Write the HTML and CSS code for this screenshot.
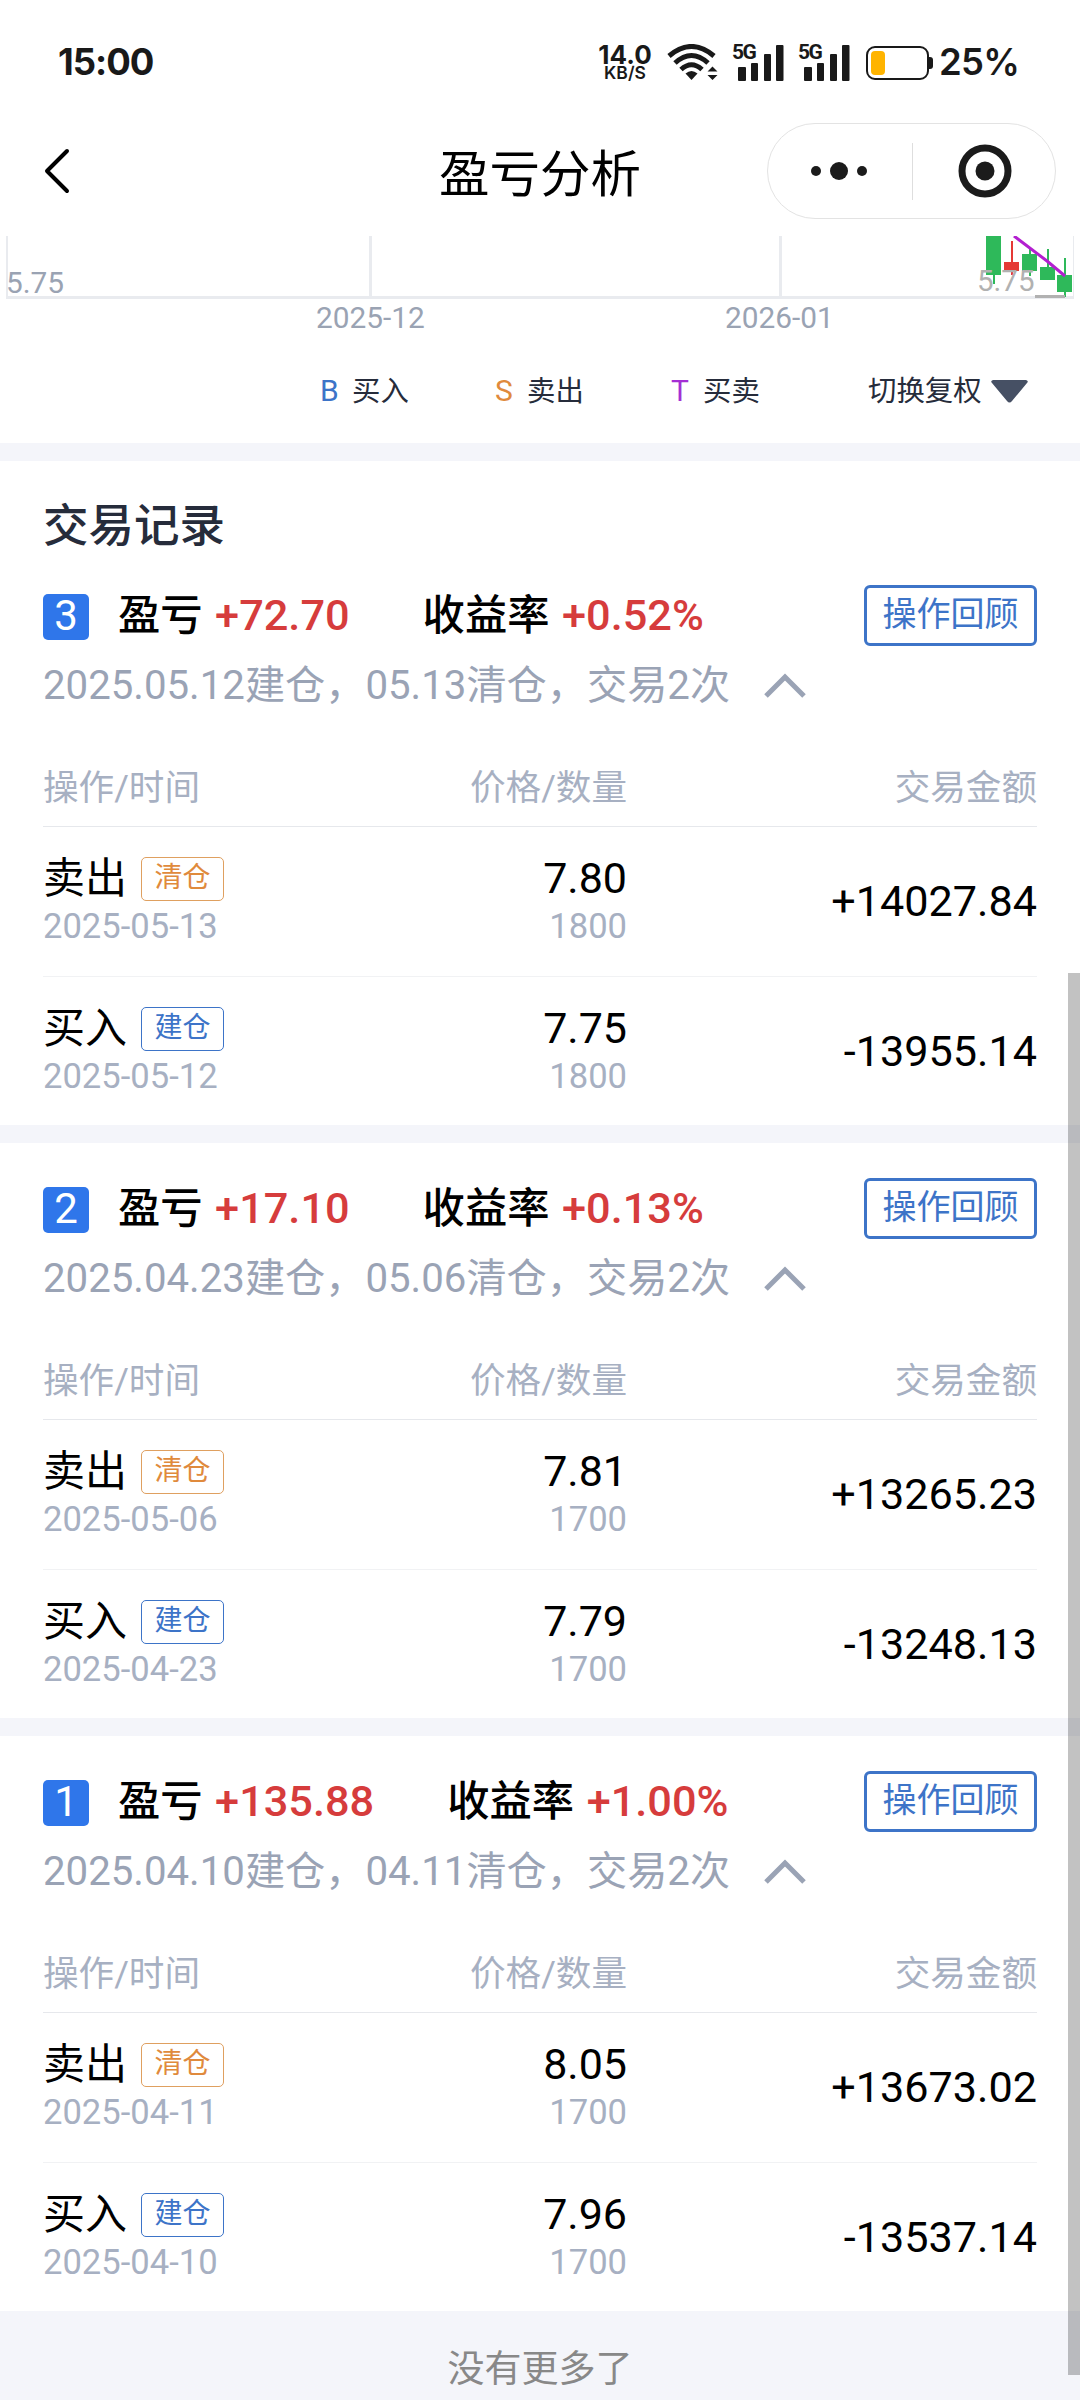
FILE: index.html
```html
<!DOCTYPE html>
<html lang="zh-CN">
<head>
<meta charset="utf-8">
<title>盈亏分析</title>
<link rel="stylesheet" href="styles.css">
</head>
<body>
<div class="screen">
  <header class="status">
    <span class="time">15:00</span>
    <div class="rate"><b>14.0</b><i>KB/S</i></div>
    <svg class="wifi" width="51" height="37" viewBox="0 0 51 37" fill="none" stroke="#191919" stroke-width="5">
      <path d="M2 12Q24.500-7 47 12M8 19Q24.500 4 41 19M14 25.500Q24.500 16 35 25.500"/>
      <path d="M18.500 29.500Q24.500 24.500 30.500 29.500L24.500 36Z" fill="#191919" stroke="none"/>
      <path d="M40.500 27.500L45.500 22.500L50.500 27.500ZM40.500 31L45.500 36L50.500 31Z" fill="#191919" stroke="none"/>
    </svg>
    <div class="signal"><span>5G</span><svg width="51" height="37" viewBox="0 0 51 37" fill="#191919"><rect x="5" y="23" width="8" height="14" rx="1"/><rect x="18" y="19" width="7" height="18" rx="1"/><rect x="31" y="10" width="7" height="27" rx="1"/><rect x="43" y="1" width="7.500" height="36" rx="1"/></svg></div>
    <div class="signal"><span>5G</span><svg width="51" height="37" viewBox="0 0 51 37" fill="#191919"><rect x="5" y="23" width="8" height="14" rx="1"/><rect x="18" y="19" width="7" height="18" rx="1"/><rect x="31" y="10" width="7" height="27" rx="1"/><rect x="43" y="1" width="7.500" height="36" rx="1"/></svg></div>
    <svg class="battery" width="67" height="34" viewBox="0 0 67 34"><rect x="1" y="1" width="61" height="32" rx="8" fill="none" stroke="#191919" stroke-width="2"/><path d="M63 11h1q3 0 3 3v6q0 3-3 3h-1z" fill="#191919"/><rect x="5" y="5" width="14" height="24" rx="4" fill="#ffb400"/></svg>
    <span class="percent">25%</span>
  </header>

  <nav class="nav">
    <svg class="back" width="26" height="48" viewBox="0 0 26 48" fill="none" stroke="#000" stroke-width="4" stroke-linecap="round" stroke-linejoin="round"><path d="M23 4L3 24L23 44"/></svg>
    <h1>盈亏分析</h1>
    <div class="capsule">
      <svg width="56" height="18" viewBox="0 0 56 18" fill="#1b1b1b"><circle cx="5" cy="9" r="5"/><circle cx="28" cy="9" r="9"/><circle cx="51" cy="9" r="5"/></svg>
      <span class="rule"></span>
      <svg width="54" height="54" viewBox="0 0 54 54"><circle cx="27" cy="27" r="23" fill="none" stroke="#1b1b1b" stroke-width="7"/><circle cx="27" cy="27" r="9.500" fill="#1b1b1b"/></svg>
    </div>
  </nav>

  <section class="chart">
    <svg width="1080" height="104" viewBox="0 0 1080 104">
      <g fill="#e9ebef"><rect x="6" y="0" width="2" height="63"/><rect x="369" y="0" width="3" height="62"/><rect x="779" y="0" width="3" height="62"/><rect x="1073" y="0" width="1" height="62"/><rect x="6" y="60" width="1068" height="3"/></g>
      <g fill="#2eb95a"><rect x="986" y="0" width="15" height="39"/><rect x="993" y="38" width="2" height="10"/><rect x="1022" y="18" width="15" height="17"/><rect x="1029" y="13" width="2" height="27"/><rect x="1040" y="31" width="15" height="13"/><rect x="1047" y="13" width="2" height="19"/><rect x="1057" y="39" width="15" height="17"/><rect x="1064" y="22" width="2" height="39"/></g>
      <g fill="#e53935"><rect x="1004" y="26" width="15" height="9"/><rect x="1011" y="5" width="2" height="34"/></g>
      <path d="M1014 0L1047 25L1065 40" fill="none" stroke="#b31fd0" stroke-width="3"/>
      <rect x="1035" y="59" width="30" height="3" fill="#b1b1b1"/>
      <g class="axis"><text x="6" y="57">5.75</text><text class="low" x="977" y="55">5.75</text><text x="316" y="92">2025-12</text><text x="725" y="92">2026-01</text></g>
    </svg>
  </section>
  <div class="legend">
    <span><b class="buy">B</b>买入</span>
    <span><b class="sell">S</b>卖出</span>
    <span><b class="both">T</b>买卖</span>
    <span class="adjust">切换复权<svg width="37" height="23" viewBox="0 0 37 23"><path d="M2 0H35Q38 1 36 3L21 21Q18.500 24 16 21L1 3Q-1 1 2 0Z" fill="#465064"/></svg></span>
  </div>

  <main>
    <article class="record">
      <h2>交易记录</h2>
      <div class="summary"><span class="no">3</span><span class="pair">盈亏 <b>+72.70</b></span><span class="pair">收益率 <b>+0.52%</b></span><span class="review">操作回顾</span></div>
      <div class="desc">2025.05.12建仓，05.13清仓，交易2次<svg width="42" height="26" viewBox="0 0 42 26"><path d="M2 23L21 4L40 23" fill="none" stroke="#9aa3b5" stroke-width="5"/></svg></div>
      <div class="head"><span>操作/时间</span><span>价格/数量</span><span>交易金额</span></div>
      <div class="row"><div><div class="op">卖出<em class="close">清仓</em></div><small>2025-05-13</small></div><div><p>7.80</p><small>1800</small></div><strong>+14027.84</strong></div>
      <div class="row"><div><div class="op">买入<em>建仓</em></div><small>2025-05-12</small></div><div><p>7.75</p><small>1800</small></div><strong>-13955.14</strong></div>
    </article>
    <article class="record">
      <div class="summary"><span class="no">2</span><span class="pair">盈亏 <b>+17.10</b></span><span class="pair">收益率 <b>+0.13%</b></span><span class="review">操作回顾</span></div>
      <div class="desc">2025.04.23建仓，05.06清仓，交易2次<svg width="42" height="26" viewBox="0 0 42 26"><path d="M2 23L21 4L40 23" fill="none" stroke="#9aa3b5" stroke-width="5"/></svg></div>
      <div class="head"><span>操作/时间</span><span>价格/数量</span><span>交易金额</span></div>
      <div class="row"><div><div class="op">卖出<em class="close">清仓</em></div><small>2025-05-06</small></div><div><p>7.81</p><small>1700</small></div><strong>+13265.23</strong></div>
      <div class="row"><div><div class="op">买入<em>建仓</em></div><small>2025-04-23</small></div><div><p>7.79</p><small>1700</small></div><strong>-13248.13</strong></div>
    </article>
    <article class="record">
      <div class="summary"><span class="no">1</span><span class="pair">盈亏 <b>+135.88</b></span><span class="pair">收益率 <b>+1.00%</b></span><span class="review">操作回顾</span></div>
      <div class="desc">2025.04.10建仓，04.11清仓，交易2次<svg width="42" height="26" viewBox="0 0 42 26"><path d="M2 23L21 4L40 23" fill="none" stroke="#9aa3b5" stroke-width="5"/></svg></div>
      <div class="head"><span>操作/时间</span><span>价格/数量</span><span>交易金额</span></div>
      <div class="row"><div><div class="op">卖出<em class="close">清仓</em></div><small>2025-04-11</small></div><div><p>8.05</p><small>1700</small></div><strong>+13673.02</strong></div>
      <div class="row"><div><div class="op">买入<em>建仓</em></div><small>2025-04-10</small></div><div><p>7.96</p><small>1700</small></div><strong>-13537.14</strong></div>
    </article>
  </main>
  <footer>没有更多了</footer>
  <div class="scrollbar"></div>
</div>
</body>
</html>
```
FILE: styles.css
```css
* { box-sizing: border-box; margin: 0; padding: 0; }
body { width: 1080px; height: 2400px; overflow: hidden; background: #fff; color: #000; font-family: Roboto, "Noto Sans CJK SC", sans-serif; }
.screen { position: relative; width: 1080px; height: 2400px; display: flex; flex-direction: column; background: #fff; }
.screen > * { flex-shrink: 0; }

.status { height: 122px; padding: 2px 64px 0 58px; display: flex; align-items: center; color: #191919; font-family: Inter, sans-serif; }
.time { font-size: 36.5px; font-weight: 650; line-height: 40px; letter-spacing: -1px; }
.rate { width: 54px; margin-left: auto; display: flex; flex-direction: column; align-items: center; }
.rate b { font-size: 26px; line-height: 21px; font-weight: 650; }
.rate i { font-size: 17.5px; line-height: 15px; font-style: normal; font-weight: 600; }
.wifi { margin-left: 15px; }
.signal { display: flex; position: relative; margin-left: 15px; }
.signal span { position: absolute; left: -1px; top: -2px; font: 700 21px/20px Roboto, sans-serif; letter-spacing: -1.5px; }
.battery { margin-left: 16px; margin-top: 2px; }
.percent { width: 77px; margin-left: 6px; font-size: 36.5px; font-weight: 600; line-height: 40px; letter-spacing: -.7px; white-space: nowrap; }

.nav { height: 114px; display: flex; align-items: center; padding: 0 24px 16px 44px; }
.nav h1 { flex: 1; margin-right: -243px; padding-top: 7px; text-align: center; font-size: 50.5px; font-weight: 400; line-height: 60px; }
.capsule { width: 289px; height: 96px; margin-left: auto; border: 1px solid #e3e3e3; border-radius: 48px; display: flex; align-items: center; justify-content: space-between; padding: 0 43px; }
.rule { width: 1px; height: 57px; background: #dedede; }

.chart { height: 104px; }
.chart svg { display: block; }
.axis { font-size: 29.8px; fill: #9aa3b3; }
.axis .low { font-size: 29.5px; fill: #b1b1b1; }
.legend { height: 103px; display: grid; grid-template-columns: 175px 176px 197px 1fr; padding: 0 54px 0 320px; align-items: center; font-size: 28.4px; line-height: 40px; color: #262c3b; }
.legend span { white-space: nowrap; }
.legend b { display: inline-block; width: 32px; font-weight: 400; font-size: 30px; }
.legend .buy { color: #3d74c8; }
.legend .sell { color: #e08a3c; }
.legend .both { color: #a42fd4; }
.adjust { display: flex; align-items: center; gap: 9px; }

.record { height: 593px; border-top: 18px solid #f4f5fa; padding: 35px 43px 0; }
.record:first-child { height: 682px; padding-top: 24px; }
h2 { height: 84px; padding-top: 8px; font-size: 45.5px; line-height: 68px; font-weight: 500; color: #262c3b; margin-bottom: 16px; }
.summary { display: flex; align-items: center; height: 61px; font-size: 42.3px; line-height: 60px; font-weight: 500; }
.no { width: 46px; height: 46px; margin: 2px 29px 0 0; border-radius: 5px; background: #2f76ea; color: #fff; text-align: center; font-size: 42px; line-height: 44px; font-weight: 400; }
.pair { margin-right: 73px; white-space: nowrap; }
.pair b { margin-left: 2px; font-size: 43.3px; font-weight: 500; color: #d63c3c; }
.review { margin-left: auto; width: 173px; height: 61px; border: 3px solid #3d74c8; border-radius: 6px; color: #3d74c8; font-size: 34px; line-height: 53px; font-weight: 400; text-align: center; }
.desc { height: 79px; display: flex; align-items: center; gap: 34px; font-size: 40.2px; line-height: 60px; color: #9aa3b5; white-space: nowrap; }
.head { height: 102px; border-bottom: 1px solid #e6e8ec; padding-top: 38px; display: grid; grid-template-columns: 300px 284px 1fr; font-size: 35.6px; line-height: 50px; color: #a7b0c2; }
.head span:nth-child(n+2), .row > :nth-child(n+2) { text-align: right; }
.row { height: 150px; display: grid; grid-template-columns: 300px 284px 1fr; font-size: 42px; }
.row:nth-last-child(2) { border-bottom: 1px solid #f1f2f4; }
.row > div { padding-top: 26px; }
.op { display: flex; align-items: center; gap: 14px; height: 51px; line-height: 51px; }
.op em { width: 83px; height: 44px; border: 1px solid #3d74c8; border-radius: 5px; color: #3d74c8; font-size: 28px; line-height: 40px; font-style: normal; text-align: center; }
.op .close { color: #e08a3c; border-color: #dfa060; }
.row p { height: 51px; font-size: 43px; line-height: 51px; }
.row small { display: block; font-size: 34.6px; line-height: 44px; color: #a7b0c2; }
.row strong { font-size: 43.2px; font-weight: 400; line-height: 150px; }

footer { flex: 1; background: #f4f5fa; text-align: center; font-size: 37px; line-height: 117px; height: 89px; overflow: hidden; color: #888; }
.scrollbar { position: absolute; left: 1068px; top: 973px; width: 12px; height: 1402px; background: rgba(0, 0, 0, .24); }
```
